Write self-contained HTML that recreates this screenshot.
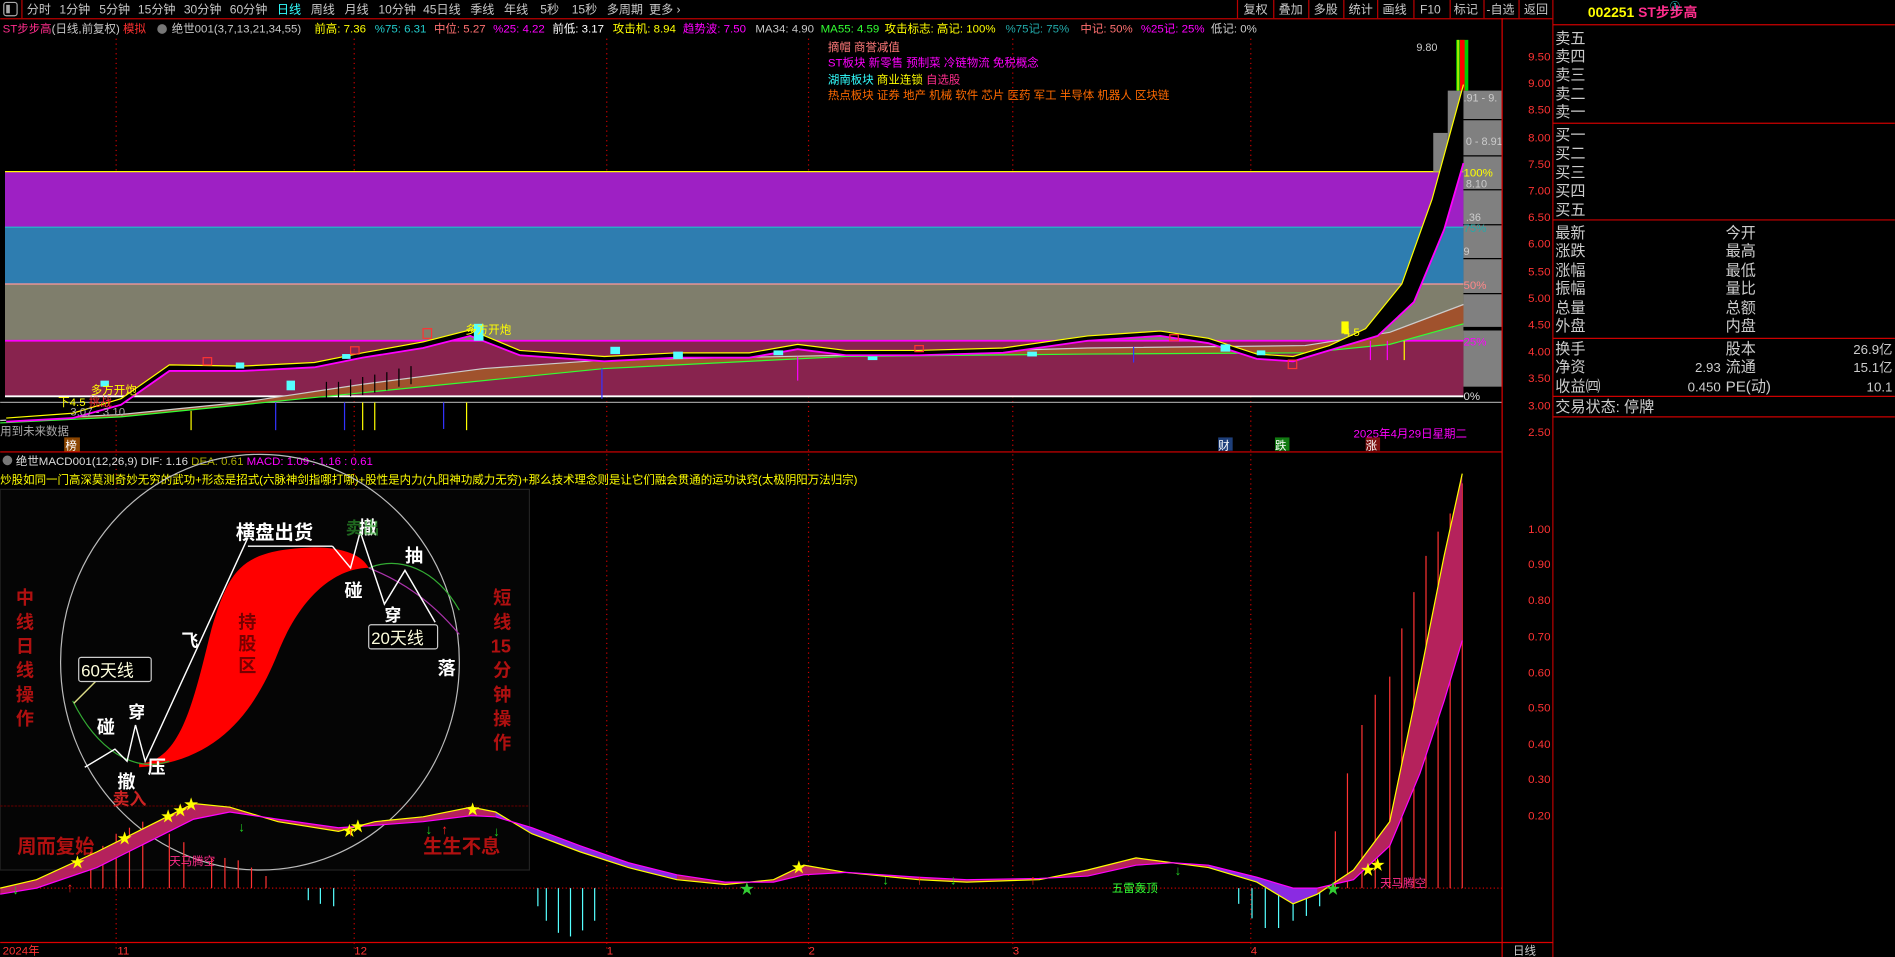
<!DOCTYPE html>
<html><head><meta charset="utf-8"><style>
html,body{margin:0;padding:0;background:#000;width:1895px;height:957px;overflow:hidden}
svg{display:block}
text{font-family:"Liberation Sans","Noto Sans CJK SC",sans-serif}
</style></head><body>
<svg width="1895" height="957" viewBox="0 0 1568 792" xmlns="http://www.w3.org/2000/svg">
<rect width="1568" height="792" fill="#000"/>
<g font-size="10" fill="#c8c8c8">
<rect x="3" y="2" width="11" height="11" fill="none" stroke="#aaa" rx="2"/><rect x="5" y="4" width="3" height="7" fill="#aaa"/>
<line x1="18" y1="0" x2="18" y2="15" stroke="#b00"/>
<text x="22" y="11">分时</text><text x="49" y="11">1分钟</text><text x="82" y="11">5分钟</text><text x="114" y="11">15分钟</text><text x="152" y="11">30分钟</text><text x="190" y="11">60分钟</text>
<text x="229" y="11" fill="#3ff">日线</text><text x="257" y="11">周线</text><text x="285" y="11">月线</text><text x="313" y="11">10分钟</text><text x="350" y="11">45日线</text><text x="389" y="11">季线</text><text x="417" y="11">年线</text><text x="447" y="11">5秒</text><text x="473" y="11">15秒</text><text x="502" y="11">多周期</text><text x="537" y="11">更多 ›</text>
<g stroke="#b00"><line x1="1024" y1="0" x2="1024" y2="15"/><line x1="1054" y1="0" x2="1054" y2="15"/><line x1="1083" y1="0" x2="1083" y2="15"/><line x1="1112" y1="0" x2="1112" y2="15"/><line x1="1140" y1="0" x2="1140" y2="15"/><line x1="1170" y1="0" x2="1170" y2="15"/><line x1="1200" y1="0" x2="1200" y2="15"/><line x1="1228" y1="0" x2="1228" y2="15"/><line x1="1257" y1="0" x2="1257" y2="15"/><line x1="1285" y1="0" x2="1285" y2="792"/></g>
<text x="1029" y="11">复权</text><text x="1058" y="11">叠加</text><text x="1087" y="11">多股</text><text x="1116" y="11">统计</text><text x="1144" y="11">画线</text><text x="1175" y="11">F10</text><text x="1203" y="11">标记</text><text x="1230" y="11">-自选</text><text x="1261" y="11">返回</text>
</g>
<line x1="0" y1="15.5" x2="1285" y2="15.5" stroke="#b00"/>
<g font-size="9.5">
<text x="2" y="27" fill="#ff2d8c">ST步步高<tspan fill="#c8c8c8">(日线,前复权)</tspan> <tspan fill="#ff3030">模拟</tspan></text>
<circle cx="134" cy="24" r="4" fill="#777"/>
<text x="142" y="27" fill="#c8c8c8">绝世001(3,7,13,21,34,55)</text>
<text x="260" y="27" fill="#ff0">前高: 7.36</text>
<text x="310" y="27" fill="#2cc">%75: 6.31</text>
<text x="359" y="27" fill="#ff7070">中位: 5.27</text>
<text x="408" y="27" fill="#f0f">%25: 4.22</text>
<text x="457" y="27" fill="#fff">前低: 3.17</text>
<text x="507" y="27" fill="#ff0">攻击机: 8.94</text>
<text x="565" y="27" fill="#f0f">趋势波: 7.50</text>
<text x="625" y="27" fill="#c8c8c8">MA34: 4.90</text>
<text x="679" y="27" fill="#3f3">MA55: 4.59</text>
<text x="732" y="27" fill="#ff0">攻击标志: 高记: 100%</text>
<text x="832" y="27" fill="#2aa">%75记: 75%</text>
<text x="894" y="27" fill="#ff7070">中记: 50%</text>
<text x="944" y="27" fill="#f0f">%25记: 25%</text>
<text x="1002" y="27" fill="#ccc">低记: 0%</text>
</g>
<g font-size="9.5">
<text x="685" y="42" fill="#ff7a7a">摘帽 商誉减值</text>
<text x="685" y="55" fill="#f0f">ST板块 新零售 预制菜 冷链物流 免税概念</text>
<text x="685" y="69" fill="#3ff">湖南板块 <tspan fill="#ff0">商业连锁</tspan> <tspan fill="#ff2d8c">自选股</tspan></text>
<text x="685" y="82" fill="#ff6a00">热点板块  证券 地产 机械 软件 芯片 医药 军工 半导体 机器人 区块链</text>
</g>
<g stroke="#c00" stroke-dasharray="1,3"><line x1="96" y1="32" x2="96" y2="785"/><line x1="293" y1="32" x2="293" y2="785"/><line x1="502" y1="32" x2="502" y2="785"/><line x1="669" y1="32" x2="669" y2="785"/><line x1="838" y1="32" x2="838" y2="785"/><line x1="1035" y1="32" x2="1035" y2="785"/></g>
<rect x="4" y="142" width="1207" height="46" fill="#9e20c4"/>
<rect x="4" y="188" width="1207" height="47" fill="#2e7db0"/>
<rect x="4" y="235" width="1207" height="47" fill="#7f7e6c"/>
<rect x="4" y="282" width="1207" height="46" fill="#88234e"/>
<line x1="4" y1="142" x2="1211" y2="142" stroke="#ff0"/>
<line x1="4" y1="188" x2="1211" y2="188" stroke="#2bc"/>
<line x1="4" y1="235" x2="1211" y2="235" stroke="#f99"/>
<line x1="4" y1="282" x2="1211" y2="282" stroke="#f0f" stroke-width="1.5"/>
<line x1="4" y1="328" x2="1211" y2="328" stroke="#fff" stroke-width="1.5"/>
<line x1="0" y1="333" x2="1243" y2="333" stroke="#999"/>
<rect x="1211" y="75" width="32" height="245" fill="#808080"/>
<rect x="1198" y="75" width="13" height="67" fill="#808080"/>
<rect x="1186" y="110" width="12" height="32" fill="#808080"/>
<g stroke="#000"><line x1="1211" y1="99" x2="1243" y2="99"/><line x1="1211" y1="129" x2="1243" y2="129"/><line x1="1211" y1="157" x2="1243" y2="157"/><line x1="1211" y1="186" x2="1243" y2="186"/><line x1="1211" y1="214" x2="1243" y2="214"/><line x1="1211" y1="243" x2="1243" y2="243"/><line x1="1211" y1="272" x2="1243" y2="272" stroke-width="3"/></g>
<rect x="1205" y="33" width="10" height="42" fill="#0c0"/><rect x="1208" y="33" width="4" height="42" fill="#f00"/><rect x="1206" y="33" width="1" height="42" fill="#ff0"/>
<g font-size="9" fill="#ccc"><text x="1172" y="42">9.80</text><text x="1211" y="84">.91 - 9.</text><text x="1213" y="120">0 - 8.91</text><text x="1213" y="155" >8.10</text><text x="1213" y="183">.36</text><text x="1211" y="211">9</text></g>
<g font-size="9.5"><text x="1211" y="146" fill="#ff0">100%</text><text x="1211" y="192" fill="#2aa">75%</text><text x="1211" y="239" fill="#f88">50%</text><text x="1211" y="286" fill="#f0f">25%</text><text x="1211" y="331" fill="#ddd">0%</text></g>
<path d="M0,348 L100,343 L200,333 L300,318 L400,305 L500,298 L700,294 L900,288 L1080,286 L1150,275 L1211,252 L1211,268 L1150,285 L1080,292 L900,293 L700,295 L500,305 L300,325 L100,345 Z" fill="#a0522d"/>
<path d="M0,348 L100,343 L200,333 L300,318 L400,305 L500,298 L700,294 L900,288 L1080,286 L1150,275 L1211,252" fill="none" stroke="#ccc"/>
<path d="M0,350 L100,345 L300,325 L500,305 L700,295 L900,293 L1080,292 L1150,285 L1211,268" fill="none" stroke="#3f3"/>
<g stroke="#000" stroke-width="1"><line x1="270" y1="330" x2="270" y2="316"/><line x1="280" y1="330" x2="280" y2="316"/><line x1="290" y1="328" x2="290" y2="314"/><line x1="300" y1="327" x2="300" y2="312"/><line x1="310" y1="325" x2="310" y2="310"/><line x1="320" y1="323" x2="320" y2="308"/><line x1="330" y1="320" x2="330" y2="305"/><line x1="340" y1="318" x2="340" y2="303"/></g>
<path d="M5,346 L60,342 L100,330 L140,302 L200,303 L260,300 L300,292 L350,283 L389,273 L430,290 L500,295 L560,292 L620,292 L660,285 L700,290 L760,290 L830,288 L900,278 L960,274 L1000,280 L1040,293 L1070,295 L1100,286 L1130,272 L1160,235 L1185,165 L1211,70 L1211,135 L1195,190 L1170,250 L1140,278 L1100,290 L1070,299 L1040,297 L1000,284 L960,278 L900,282 L830,292 L760,294 L700,294 L660,289 L620,296 L560,296 L500,299 L430,294 L389,278 L350,288 L300,296 L260,304 L200,307 L140,307 L100,335 L60,346 L5,349 Z" fill="#000"/>
<path d="M5,346 L60,342 L100,330 L140,302 L200,303 L260,300 L300,292 L350,283 L389,273 L430,290 L500,295 L560,292 L620,292 L660,285 L700,290 L760,290 L830,288 L900,278 L960,274 L1000,280 L1040,293 L1070,295 L1100,286 L1130,272 L1160,235 L1185,165 L1211,70" fill="none" stroke="#ff0"/>
<path d="M5,349 L60,346 L100,335 L140,307 L200,307 L260,304 L300,296 L350,288 L389,278 L430,294 L500,299 L560,296 L620,296 L660,289 L700,294 L760,294 L830,292 L900,282 L960,278 L1000,284 L1040,297 L1070,299 L1100,290 L1140,278 L1170,250 L1195,190 L1211,135" fill="none" stroke="#f0f" stroke-width="1.5"/>
<g fill="#5ff"><rect x="83" y="315" width="7" height="5"/><rect x="195" y="300" width="7" height="5"/><rect x="237" y="315" width="7" height="8"/><rect x="283" y="293" width="7" height="4"/><rect x="392" y="268" width="8" height="14"/><rect x="505" y="287" width="8" height="6"/><rect x="557" y="291" width="8" height="6"/><rect x="640" y="290" width="8" height="4"/><rect x="718" y="295" width="8" height="3"/><rect x="850" y="291" width="8" height="4"/><rect x="1010" y="285" width="8" height="6"/><rect x="1040" y="290" width="7" height="4"/></g>
<g fill="none" stroke="#f33"><rect x="168" y="296" width="7" height="6"/><rect x="350" y="272" width="7" height="8"/><rect x="290" y="287" width="7" height="6"/><rect x="1066" y="298" width="7" height="7"/><rect x="757" y="286" width="7" height="5"/><rect x="968" y="277" width="7" height="5"/></g>
<rect x="1110" y="266" width="6" height="10" fill="#ff0"/>
<g stroke="#33f"><line x1="228" y1="333" x2="228" y2="356"/><line x1="285" y1="333" x2="285" y2="356"/><line x1="367" y1="333" x2="367" y2="355"/><line x1="498" y1="305" x2="498" y2="330"/><line x1="938" y1="287" x2="938" y2="300"/></g>
<g stroke="#ff0"><line x1="300" y1="333" x2="300" y2="356"/><line x1="310" y1="333" x2="310" y2="356"/><line x1="386" y1="333" x2="386" y2="356"/><line x1="158" y1="340" x2="158" y2="356"/><line x1="1162" y1="282" x2="1162" y2="298"/></g>
<g stroke="#f0f"><line x1="1134" y1="282" x2="1134" y2="298"/><line x1="1148" y1="282" x2="1148" y2="298"/><line x1="660" y1="295" x2="660" y2="315"/></g>
<g font-size="9.5"><text x="385" y="276" fill="#ff0">多方开炮</text><text x="75" y="326" fill="#ff0">多方开炮</text><text x="48" y="336" fill="#ff0">下4.5 <tspan fill="#f33">挑战</tspan></text><text x="58" y="344" fill="#aaa">3.07 - 3.10</text><text x="1112" y="278" fill="#ff0">4.5</text><text x="0" y="360" fill="#aaa">用到未来数据</text><text x="1120" y="362" fill="#f0f">2025年4月29日星期二</text></g>
<rect x="53" y="362" width="13" height="12" fill="#8b4500"/><text x="54" y="372" font-size="9.5" fill="#fff">榜</text>
<rect x="1008" y="362" width="12" height="11" fill="#1e3f7a"/><text x="1008" y="372" font-size="9.5" fill="#fff">财</text>
<rect x="1055" y="362" width="12" height="11" fill="#127a12"/><text x="1055" y="372" font-size="9.5" fill="#fff">跌</text>
<rect x="1130" y="362" width="12" height="11" fill="#7a1010"/><text x="1130" y="372" font-size="9.5" fill="#fff">涨</text>
<line x1="0" y1="374" x2="1243" y2="374" stroke="#d00"/>
<line x1="1243" y1="15" x2="1243" y2="792" stroke="#d00"/>
<g font-size="9.5" fill="#f33" text-anchor="end">
<text x="1283" y="50">9.50</text><text x="1283" y="72">9.00</text><text x="1283" y="94">8.50</text><text x="1283" y="117">8.00</text><text x="1283" y="139">7.50</text><text x="1283" y="161">7.00</text><text x="1283" y="183">6.50</text><text x="1283" y="205">6.00</text><text x="1283" y="228">5.50</text><text x="1283" y="250">5.00</text><text x="1283" y="272">4.50</text><text x="1283" y="294">4.00</text><text x="1283" y="316">3.50</text><text x="1283" y="339">3.00</text><text x="1283" y="361">2.50</text>
<text x="1283" y="441">1.00</text><text x="1283" y="470">0.90</text><text x="1283" y="500">0.80</text><text x="1283" y="530">0.70</text><text x="1283" y="560">0.60</text><text x="1283" y="589">0.50</text><text x="1283" y="619">0.40</text><text x="1283" y="648">0.30</text><text x="1283" y="678">0.20</text>
</g>
<circle cx="6" cy="381" r="4" fill="#777"/>
<text x="13" y="385" font-size="9.5" fill="#ddd">绝世MACD001(12,26,9)  DIF: 1.16  <tspan fill="#aa0">DEA: 0.61</tspan>  <tspan fill="#f0f">MACD: 1.09 : 1.16 : 0.61</tspan></text>
<text x="0" y="400" font-size="9.5" fill="#ff0">炒股如同一门高深莫测奇妙无穷的武功+形态是招式(六脉神剑指哪打哪)+股性是内力(九阳神功威力无穷)+那么技术理念则是让它们融会贯通的运功诀窍(太极阴阳万法归宗)</text>
<rect x="0" y="405" width="438" height="315" fill="#050505" stroke="#222"/>
<line x1="0" y1="667" x2="438" y2="667" stroke="#500" stroke-dasharray="2,1"/>
<ellipse cx="215" cy="548" rx="165" ry="172" fill="none" stroke="#bbb"/>
<path d="M115,632 C150,630 160,580 175,520 C190,470 200,455 260,453 C285,453 300,460 305,470 C280,470 250,490 230,540 C210,590 180,630 115,635 Z" fill="#f00"/>
<path d="M60,580 C80,620 110,640 140,630" fill="none" stroke="#3a3"/>
<path d="M305,470 C330,460 360,470 380,505" fill="none" stroke="#3a3"/>
<path d="M305,470 C330,480 355,495 380,525" fill="none" stroke="#a3a"/>
<path d="M70,635 L95,620 L105,630 L112,600 L120,630 L205,445 M205,452 L275,452 M275,452 L290,470 L298,440 L318,500 L335,472 L360,515" fill="none" stroke="#fff" stroke-width="1.2"/>
<path d="M61,582 L80,563" stroke="#dd8" stroke-width="1.2"/>
<g font-family="Liberation Serif,Noto Serif CJK SC,serif" fill="#fff" font-weight="bold">
<text x="195" y="446" font-size="16">横盘出货</text><text x="297" y="442" font-size="15">撤</text><text x="286" y="442" font-size="14" fill="#3a3" opacity=".6">卖出</text>
<text x="335" y="465" font-size="15">抽</text><text x="285" y="494" font-size="15">碰</text><text x="318" y="514" font-size="14">穿</text>
<text x="150" y="535" font-size="14">飞</text><text x="362" y="558" font-size="15">落</text>
<text x="80" y="607" font-size="15">碰</text><text x="106" y="594" font-size="14">穿</text><text x="97" y="652" font-size="15">撤</text><text x="122" y="640" font-size="15">压</text>
<text x="93" y="666" font-size="14" fill="#c22">卖入</text>
</g>
<rect x="305" y="517" width="57" height="20" fill="#000" stroke="#ccc" rx="2"/><text x="307" y="533" font-size="14" fill="#ffd" font-family="Liberation Serif,serif">20天线</text>
<rect x="65" y="544" width="60" height="20" fill="#000" stroke="#ccc" rx="2"/><text x="67" y="560" font-size="14" fill="#ffd" font-family="Liberation Serif,serif">60天线</text>
<g font-size="15" fill="#b01010" font-weight="bold" font-family="Liberation Serif,Noto Serif CJK SC,serif">
<text x="197" y="520" fill="#700">持</text><text x="197" y="538" fill="#700">股</text><text x="197" y="556" fill="#700">区</text>
<text x="13" y="500">中</text><text x="13" y="520">线</text><text x="13" y="540">日</text><text x="13" y="560">线</text><text x="13" y="580">操</text><text x="13" y="600">作</text>
<text x="408" y="500">短</text><text x="408" y="520">线</text><text x="406" y="540">15</text><text x="408" y="560">分</text><text x="408" y="580">钟</text><text x="408" y="600">操</text><text x="408" y="620">作</text>
<text x="14" y="706" font-size="16">周而复始</text><text x="350" y="706" font-size="16">生生不息</text>
</g>
<line x1="0" y1="735" x2="1243" y2="735" stroke="#c00" stroke-dasharray="1,2"/>
<g stroke="#f33"><line x1="75" y1="735" x2="75" y2="705"/><line x1="85" y1="735" x2="85" y2="700"/><line x1="96" y1="735" x2="96" y2="690"/><line x1="107" y1="735" x2="107" y2="685"/><line x1="118" y1="735" x2="118" y2="680"/><line x1="140" y1="735" x2="140" y2="690"/><line x1="152" y1="735" x2="152" y2="697"/><line x1="175" y1="735" x2="175" y2="710"/><line x1="186" y1="735" x2="186" y2="710"/><line x1="197" y1="735" x2="197" y2="712"/><line x1="208" y1="735" x2="208" y2="718"/><line x1="220" y1="735" x2="220" y2="725"/>
<line x1="1105" y1="735" x2="1105" y2="688"/><line x1="1115" y1="735" x2="1115" y2="640"/><line x1="1127" y1="735" x2="1127" y2="600"/><line x1="1138" y1="735" x2="1138" y2="575"/><line x1="1150" y1="735" x2="1150" y2="560"/><line x1="1160" y1="735" x2="1160" y2="520"/><line x1="1170" y1="735" x2="1170" y2="490"/><line x1="1180" y1="735" x2="1180" y2="460"/><line x1="1190" y1="735" x2="1190" y2="440"/><line x1="1200" y1="735" x2="1200" y2="425"/><line x1="1210" y1="735" x2="1210" y2="400"/></g>
<g stroke="#5ff"><line x1="445" y1="735" x2="445" y2="750"/><line x1="452" y1="735" x2="452" y2="762"/><line x1="462" y1="735" x2="462" y2="772"/><line x1="472" y1="735" x2="472" y2="775"/><line x1="482" y1="735" x2="482" y2="770"/><line x1="492" y1="735" x2="492" y2="762"/><line x1="255" y1="735" x2="255" y2="745"/><line x1="265" y1="735" x2="265" y2="748"/><line x1="276" y1="735" x2="276" y2="750"/><line x1="1025" y1="735" x2="1025" y2="748"/><line x1="1036" y1="735" x2="1036" y2="760"/><line x1="1047" y1="735" x2="1047" y2="768"/><line x1="1058" y1="735" x2="1058" y2="768"/><line x1="1070" y1="735" x2="1070" y2="762"/><line x1="1081" y1="735" x2="1081" y2="758"/><line x1="1092" y1="735" x2="1092" y2="750"/></g>
<path d="M0,735 L30,728 L80,705 L120,685 L160,665 L190,668 L230,680 L280,688 L310,680 L350,676 L390,668 L410,672 L440,690 L480,705 L520,718 L560,728 L600,732 L640,728 L665,716 L700,722 L760,728 L800,730 L860,728 L900,720 L940,710 L970,714 L1000,718 L1040,730 L1070,748 L1090,740 L1120,720 L1150,680 L1175,560 L1195,460 L1210,392 L1210,530 L1195,580 L1175,640 L1150,700 L1120,728 L1090,735 L1070,735 L1040,726 L1000,716 L970,714 L940,716 L900,725 L860,727 L800,728 L760,726 L700,722 L665,724 L640,730 L600,730 L560,724 L520,714 L480,700 L440,685 L410,676 L390,675 L350,680 L310,683 L280,685 L230,678 L190,672 L160,678 L120,698 L80,718 L30,735 L0,740 Z" fill="#b5225c"/>
<path d="M410,672 L440,690 L480,705 L520,718 L560,728 L560,724 L520,714 L480,700 L440,685 L410,676 Z" fill="#8a2be2"/>
<path d="M1000,718 L1040,730 L1070,748 L1090,740 L1090,735 L1070,735 L1040,726 L1000,716 Z" fill="#8a2be2"/>
<path d="M0,735 L30,728 L80,705 L120,685 L160,665 L190,668 L230,680 L280,688 L310,680 L350,676 L390,668 L410,672 L440,690 L480,705 L520,718 L560,728 L600,732 L640,728 L665,716 L700,722 L760,728 L800,730 L860,728 L900,720 L940,710 L970,714 L1000,718 L1040,730 L1070,748 L1090,740 L1120,720 L1150,680 L1175,560 L1195,460 L1210,392" fill="none" stroke="#ff0"/>
<path d="M0,740 L30,735 L80,718 L120,698 L160,678 L190,672 L230,678 L280,685 L310,683 L350,680 L390,675 L410,676 L440,685 L480,700 L520,714 L560,724 L600,730 L640,730 L665,724 L700,722 L760,726 L800,728 L860,727 L900,725 L940,716 L970,714 L1000,716 L1040,726 L1070,735 L1090,735 L1120,728 L1150,700 L1175,640 L1195,580 L1210,530" fill="none" stroke="#f0f"/>
<g fill="#ff0" font-size="12"><text x="58" y="718">★</text><text x="97" y="698">★</text><text x="133" y="680">★</text><text x="143" y="675">★</text><text x="152" y="670">★</text><text x="283" y="692">★</text><text x="290" y="688">★</text><text x="385" y="674">★</text><text x="655" y="722">★</text><text x="1126" y="724">★</text><text x="1134" y="720">★</text></g>
<g fill="#3c3" font-size="12"><text x="1097" y="740">★</text><text x="612" y="740">★</text></g>
<g font-size="11" fill="#2c2"><text x="10" y="740">↓</text><text x="197" y="688">↓</text><text x="352" y="690">↓</text><text x="408" y="692">↓</text><text x="730" y="732">↓</text><text x="786" y="732">↓</text><text x="972" y="724">↓</text></g>
<g font-size="11" fill="#f22"><text x="55" y="738">↑</text><text x="287" y="692">↑</text><text x="365" y="690">↑</text><text x="758" y="732">↑</text><text x="852" y="732">↑</text></g>
<text x="140" y="716" font-size="9.5" fill="#ff2d8c">天马腾空</text>
<text x="1142" y="734" font-size="9.5" fill="#ff2d8c">天马腾空</text>
<text x="920" y="738" font-size="9.5" fill="#3f3">五雷轰顶</text>
<line x1="0" y1="780" x2="1285" y2="780" stroke="#d00"/>
<g font-size="9.5" fill="#f33"><text x="2" y="790">2024年</text><text x="97" y="790">11</text><text x="293" y="790">12</text><text x="502" y="790">1</text><text x="669" y="790">2</text><text x="838" y="790">3</text><text x="1035" y="790">4</text></g>
<text x="1252" y="790" font-size="9.5" fill="#ccc">日线</text>
<g font-size="12.5" fill="#ccc">
<text x="1314" y="14" fill="#ff0" font-weight="bold" font-size="11.5">002251 <tspan fill="#ff2d8c">ST步步高</tspan></text><text x="1382" y="8" font-size="8" fill="#3ff">①</text>
<g stroke="#c00"><line x1="1285" y1="20.5" x2="1568" y2="20.5"/><line x1="1285" y1="102" x2="1568" y2="102"/><line x1="1285" y1="182" x2="1568" y2="182"/><line x1="1285" y1="280" x2="1568" y2="280"/><line x1="1285" y1="328" x2="1568" y2="328"/><line x1="1285" y1="345" x2="1568" y2="345"/></g>
<text x="1287" y="36">卖五</text><text x="1287" y="51">卖四</text><text x="1287" y="66">卖三</text><text x="1287" y="82">卖二</text><text x="1287" y="97">卖一</text>
<text x="1287" y="116">买一</text><text x="1287" y="131">买二</text><text x="1287" y="147">买三</text><text x="1287" y="162">买四</text><text x="1287" y="178">买五</text>
<text x="1287" y="197">最新</text><text x="1287" y="212">涨跌</text><text x="1287" y="228">涨幅</text><text x="1287" y="243">振幅</text><text x="1287" y="259">总量</text><text x="1287" y="274">外盘</text>
<text x="1428" y="197">今开</text><text x="1428" y="212">最高</text><text x="1428" y="228">最低</text><text x="1428" y="243">量比</text><text x="1428" y="259">总额</text><text x="1428" y="274">内盘</text>
<text x="1287" y="293">换手</text><text x="1287" y="308">净资</text><text x="1287" y="324">收益㈣</text>
<text x="1428" y="293">股本</text><text x="1428" y="308">流通</text><text x="1428" y="324">PE(动)</text>
<g text-anchor="end" font-size="11"><text x="1424" y="308">2.93</text><text x="1424" y="324">0.450</text><text x="1566" y="293">26.9亿</text><text x="1566" y="308">15.1亿</text><text x="1566" y="324">10.1</text></g>
<text x="1287" y="341">交易状态: 停牌</text>
</g>
</svg>
</body></html>
